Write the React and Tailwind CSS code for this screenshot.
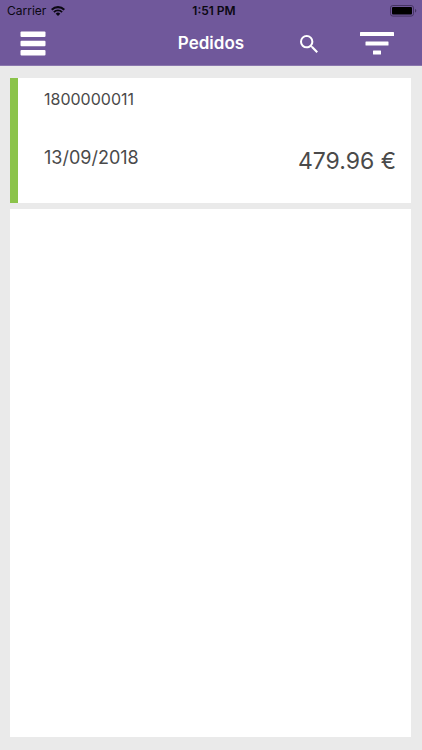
import React from 'react';

const orders = [{ id: '1800000011', date: '13/09/2018', total: '479.96 €' }];

const WifiIcon = () => (
  <svg viewBox="0 0 14 10" className="w-[14px] h-[10px]" fill="none" aria-hidden="true">
    <path d="M0.7 3.7a9 9 0 0 1 12.6 0" stroke="#0b0812" strokeWidth="2.1" />
    <path d="M2.9 6.1a5.8 5.8 0 0 1 8.2 0" stroke="#0b0812" strokeWidth="1.9" />
    <path d="M7 10 4.7 7.7a3.2 3.2 0 0 1 4.6 0z" fill="#0b0812" />
  </svg>
);

const BatteryIcon = () => (
  <svg viewBox="0 0 27 12" className="w-[27px] h-[12px]" fill="none" aria-hidden="true">
    <rect x="0.5" y="0.5" width="23" height="10.6" rx="2.4" stroke="#453463" />
    <rect x="2" y="2" width="20" height="7.6" rx="1" fill="#000" />
    <path d="M25 4v3.6c.8-.3 1.3-1 1.3-1.8S25.8 4.3 25 4z" fill="#453463" />
  </svg>
);

const MenuIcon = () => (
  <svg viewBox="0 0 26 26" className="w-[26px] h-[26px]" fill="#fff" aria-hidden="true">
    <rect x="0.5" y="0.5" width="25" height="5.6" rx="1" />
    <rect x="0.5" y="9.7" width="25" height="5.6" rx="1" />
    <rect x="0.5" y="18.9" width="25" height="5.6" rx="1" />
  </svg>
);

const SearchIcon = () => (
  <svg viewBox="3 3 17.5 17.5" className="w-[18px] h-[18px]" fill="#fff" aria-hidden="true">
    <path d="M15.5 14h-.79l-.28-.27A6.471 6.471 0 0 0 16 9.5 6.5 6.5 0 1 0 9.5 16c1.61 0 3.09-.59 4.23-1.57l.27.28v.79l5 4.99L20.49 19l-4.99-5zm-6 0C7.01 14 5 11.99 5 9.5S7.01 5 9.5 5 14 7.01 14 9.5 11.99 14 9.5 14z" />
  </svg>
);

const FilterIcon = () => (
  <svg viewBox="0 0 34 24" className="w-[34px] h-[24px]" fill="#fff" aria-hidden="true">
    <rect x="0" y="0" width="34" height="4" rx="0.5" />
    <rect x="5.5" y="9.4" width="23" height="4" rx="0.5" />
    <rect x="13" y="18.6" width="8" height="4" rx="0.5" />
  </svg>
);

const App = () => {
  return (
    <div className="min-h-screen flex flex-col bg-[#eaeaea] font-['Inter','Liberation_Sans',sans-serif] text-[#4a4a4a]">
      <header className="bg-[#70589b] border-b border-[#8a77ad]">
        {/* Status bar */}
        <div className="grid grid-cols-3 items-center h-[22px] pl-[7px] pr-[5px] text-[12px] text-[#0b0812]">
          <div className="flex items-center gap-[5px]">
            <span>Carrier</span>
            <WifiIcon />
          </div>
          <span className="pl-1 text-center font-semibold">1:51 PM</span>
          <div className="flex justify-end">
            <BatteryIcon />
          </div>
        </div>

        {/* Navigation bar */}
        <div className="grid grid-cols-3 items-center h-[43px] pl-5 pr-7">
          <button type="button" aria-label="Menu" className="justify-self-start">
            <MenuIcon />
          </button>
          <h1 className="pl-2 text-center text-[17px] font-semibold text-white">Pedidos</h1>
          <div className="flex items-center justify-end gap-[42px]">
            <button type="button" aria-label="Buscar">
              <SearchIcon />
            </button>
            <button type="button" aria-label="Filtrar">
              <FilterIcon />
            </button>
          </div>
        </div>
      </header>

      <main className="flex-1 flex flex-col gap-[6px] pt-3 pb-[13px] pl-[10px] pr-[11px]">
        {orders.map((order) => (
          <article
            key={order.id}
            className="bg-white border-l-8 border-[#8bc34a] pl-[26px] pr-[15px] pt-[9px] pb-[26px]"
          >
            <p className="text-[16px] leading-6">{order.id}</p>
            <div className="flex items-end justify-between pt-[31px]">
              <p className="text-[18px] leading-8 pb-[3px]">{order.date}</p>
              <p className="text-[23px] leading-8">{order.total}</p>
            </div>
          </article>
        ))}
        <div className="flex-1 bg-white" />
      </main>
    </div>
  );
};

export default App;
